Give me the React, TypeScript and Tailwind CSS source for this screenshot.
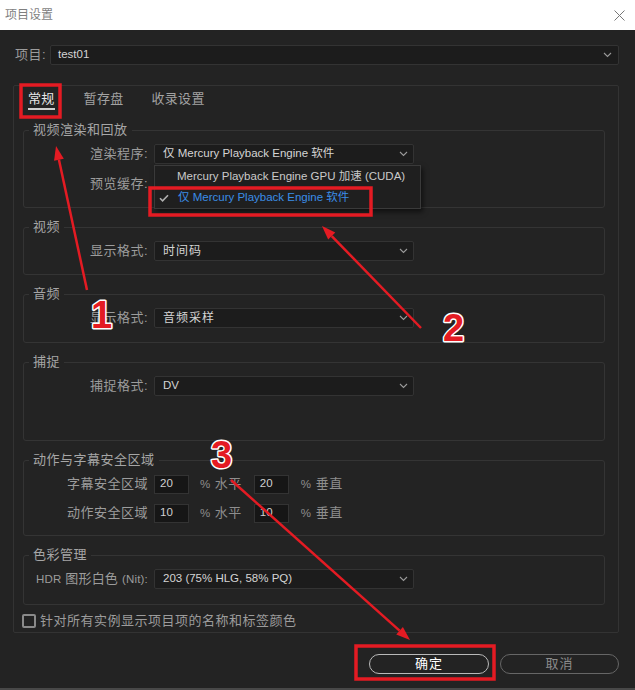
import React from 'react';

const RED = '#e41b23';

function Chevron() {
  return (
    <svg width="9" height="6" viewBox="0 0 9 6" className="shrink-0">
      <path d="M1 1l3.5 3.5L8 1" fill="none" stroke="#9a9a9a" strokeWidth="1.1" />
    </svg>
  );
}

function Select({ value, cjk }: { value: string; cjk?: boolean }) {
  return (
    <div className="flex h-[20px] w-[260px] shrink-0 items-center justify-between rounded-[2px] border border-[#333333] bg-[#1c1c1c] pl-[8px] pr-[5px]">
      <span className={cjk ? 'text-[12px] tracking-[1px] text-[#d4d4d4]' : 'text-[11.5px] text-[#d4d4d4]'}>{value}</span>
      <Chevron />
    </div>
  );
}

function NumBox({ value }: { value: string }) {
  return (
    <div className="flex h-[19px] w-[35px] shrink-0 items-center border border-[#333333] bg-[#161616] pl-[5px] text-[11.5px] text-[#d0d0d0]">
      {value}
    </div>
  );
}

function Row({ label, children }: { label: React.ReactNode; children: React.ReactNode }) {
  return (
    <div className="flex h-[20px] items-center">
      <span className="w-[130px] shrink-0 whitespace-nowrap pr-[6px] text-right text-[13px] tracking-[0.5px] text-[#9c9c9c]">{label}</span>
      {children}
    </div>
  );
}

function Group({ title, children, pb }: { title: string; children: React.ReactNode; pb: string }) {
  return (
    <fieldset className={`rounded-[3px] border border-[#343434] pt-[5px] ${pb}`}>
      <legend className="ml-[5px] h-[18px] px-[4px] text-[13px] leading-[18px] tracking-[0.5px] text-[#a6a6a6]">{title}</legend>
      {children}
    </fieldset>
  );
}

function SafeRow({ label, h, v }: { label: string; h: string; v: string }) {
  return (
    <Row label={label}>
      <NumBox value={h} />
      <span className="ml-[11px] text-[13px] tracking-[0.5px] text-[#8e8e8e]">
        <span className="text-[11.5px]">%</span> 水平
      </span>
      <div className="ml-[12px]">
        <NumBox value={v} />
      </div>
      <span className="ml-[12px] text-[13px] tracking-[0.5px] text-[#8e8e8e]">
        <span className="text-[11.5px]">%</span> 垂直
      </span>
    </Row>
  );
}

function Tab({ label, active, className }: { label: string; active?: boolean; className?: string }) {
  return (
    <div className={`flex flex-col items-stretch px-[2px] ${className ?? ''}`}>
      <span className={active ? 'block h-[18px] text-[13px] leading-[18px] tracking-[0.3px] text-[#e8e8e8]' : 'block h-[18px] text-[13px] leading-[18px] tracking-[0.3px] text-[#a2a2a2]'}>
        {label}
      </span>
      <div className={active ? 'h-[2px] bg-[#cfcfcf]' : 'h-[2px]'} />
    </div>
  );
}

function Arrow({ x1, y1, x2, y2 }: { x1: number; y1: number; x2: number; y2: number }) {
  const dx = x2 - x1;
  const dy = y2 - y1;
  const len = Math.hypot(dx, dy);
  const ux = dx / len;
  const uy = dy / len;
  const bx = x2 - ux * 14;
  const by = y2 - uy * 14;
  const nx = -uy * 5;
  const ny = ux * 5;
  return (
    <g>
      <line x1={x1} y1={y1} x2={bx} y2={by} stroke={RED} strokeWidth="2.5" />
      <polygon points={`${x2},${y2} ${bx + nx},${by + ny} ${bx - nx},${by - ny}`} fill={RED} />
    </g>
  );
}

function Num({ x, y, n }: { x: number; y: number; n: string }) {
  return (
    <text
      x={x}
      y={y}
      fontSize="38"
      fontWeight="700"
      fontFamily="Liberation Sans, Arial, sans-serif"
      fill={RED}
      stroke="#ffffff"
      strokeWidth="3"
      strokeLinejoin="round"
      paintOrder="stroke"
    >
      {n}
    </text>
  );
}

export default function App() {
  return (
    <div className="relative h-[690px] w-[635px] overflow-hidden border-b-2 border-[#484848] bg-[#232323] [font-family:'Liberation_Sans','Noto_Sans_CJK_SC',sans-serif]">
      {/* title bar */}
      <div className="flex h-[30px] items-center justify-between bg-white pl-[5px] pr-[10px]">
        <span className="text-[12px] text-[#7f7f7f]">项目设置</span>
        <svg width="11" height="11" viewBox="0 0 11 11">
          <path d="M0.5 0.5l10 10M10.5 0.5l-10 10" stroke="#777777" strokeWidth="1" />
        </svg>
      </div>

      {/* project picker */}
      <div className="mt-[15px] flex items-center pl-[15px] pr-[16px]">
        <span className="w-[35px] shrink-0 text-[13px] tracking-[0.5px] text-[#9c9c9c]">项目:</span>
        <div className="flex h-[20px] flex-1 items-center justify-between rounded-[2px] border border-[#333333] bg-[#1c1c1c] pl-[7px] pr-[6px]">
          <span className="text-[11.5px] text-[#d4d4d4]">test01</span>
          <Chevron />
        </div>
      </div>

      {/* settings panel */}
      <div className="ml-[13px] mr-[16px] mt-[20px] rounded-[2px] border border-[#333333] pt-[4px] pb-[4px]">
        <div className="flex pl-[12px]">
          <Tab label="常规" active />
          <Tab label="暂存盘" className="ml-[25px]" />
          <Tab label="收录设置" className="ml-[24px]" />
        </div>

        <div className="mt-[11px] flex flex-col gap-[10px] pl-[9px] pr-[13px]">
          <Group title="视频渲染和回放" pb="pb-[13px]">
            <div className="flex flex-col gap-[10px]">
              <Row label="渲染程序:">
                <Select value="仅 Mercury Playback Engine 软件" />
              </Row>
              <Row label="预览缓存:">
                <Select value="自动" cjk />
              </Row>
            </div>
          </Group>

          <Group title="视频" pb="pb-[13px]">
            <Row label="显示格式:">
              <Select value="时间码" cjk />
            </Row>
          </Group>

          <Group title="音频" pb="pb-[14px]">
            <Row label="显示格式:">
              <Select value="音频采样" cjk />
            </Row>
          </Group>

          <Group title="捕捉" pb="pb-[44px]">
            <Row label="捕捉格式:">
              <Select value="DV" />
            </Row>
          </Group>

          <Group title="动作与字幕安全区域" pb="pb-[12px]">
            <div className="flex flex-col gap-[9px]">
              <SafeRow label="字幕安全区域" h="20" v="20" />
              <SafeRow label="动作安全区域" h="10" v="10" />
            </div>
          </Group>

          <Group title="色彩管理" pb="pb-[15px]">
            <Row
              label={
                <span className="tracking-[0.2px]">
                  <span className="text-[11.5px]">HDR</span> 图形白色 <span className="text-[11.5px]">(Nit):</span>
                </span>
              }
            >
              <Select value="203 (75% HLG, 58% PQ)" />
            </Row>
          </Group>
        </div>

        <div className="mt-[9px] flex h-[14px] items-center gap-[4px] pl-[8px]">
          <div className="h-[14px] w-[14px] shrink-0 rounded-[2px] border-2 border-[#8a8a8a]" />
          <span className="block h-[14px] text-[13px] leading-[14px] tracking-[0.5px] text-[#9c9c9c]">针对所有实例显示项目项的名称和标签颜色</span>
        </div>
      </div>

      {/* dialog buttons */}
      <div className="mt-[21px] flex justify-end gap-[11px] pr-[16px]">
        <button className="flex h-[20px] w-[120px] items-center justify-center rounded-full border-[1.5px] border-[#b9b9b9] text-[13px] tracking-[1px] text-white">
          确定
        </button>
        <button className="flex h-[20px] w-[119px] items-center justify-center rounded-full border-[1.5px] border-[#666666] text-[13px] tracking-[1px] text-[#8b8b8b]">
          取消
        </button>
      </div>

      {/* open renderer menu */}
      <div className="absolute left-[154px] top-[165px] flex w-[267px] flex-col border border-[#3a3a3a] bg-[#1f1f1f] shadow-[2px_3px_5px_rgba(0,0,0,0.55)]">
        <div className="flex h-[21px] items-center pl-[22px] text-[11.5px] text-[#cacaca]">Mercury Playback Engine GPU 加速 (CUDA)</div>
        <div className="flex h-[21px] items-center pl-[4px] text-[11.5px] text-[#3b8de6]">
          <svg width="10" height="8" viewBox="0 0 10 8" className="mr-[9px]">
            <path d="M1 4.2l2.6 2.6L9 1.2" fill="none" stroke="#b0b0b0" strokeWidth="1.6" />
          </svg>
          仅 Mercury Playback Engine 软件
        </div>
      </div>

      {/* annotations */}
      <svg className="pointer-events-none absolute left-0 top-0" width="635" height="690" viewBox="0 0 635 690">
        <rect x="21" y="85" width="39" height="32" fill="none" stroke={RED} strokeWidth="3.5" />
        <rect x="150" y="188" width="221" height="27" fill="none" stroke={RED} strokeWidth="3.5" />
        <rect x="356" y="646" width="138" height="33" fill="none" stroke={RED} strokeWidth="3.5" />
        <Arrow x1={87} y1={290} x2={56} y2={146} />
        <Arrow x1={421} y1={328} x2={322} y2={226} />
        <Arrow x1={231} y1={480} x2={410} y2={640} />
        <Num x={91} y={328} n="1" />
        <Num x={443} y={341} n="2" />
        <Num x={211} y={468} n="3" />
      </svg>
    </div>
  );
}
